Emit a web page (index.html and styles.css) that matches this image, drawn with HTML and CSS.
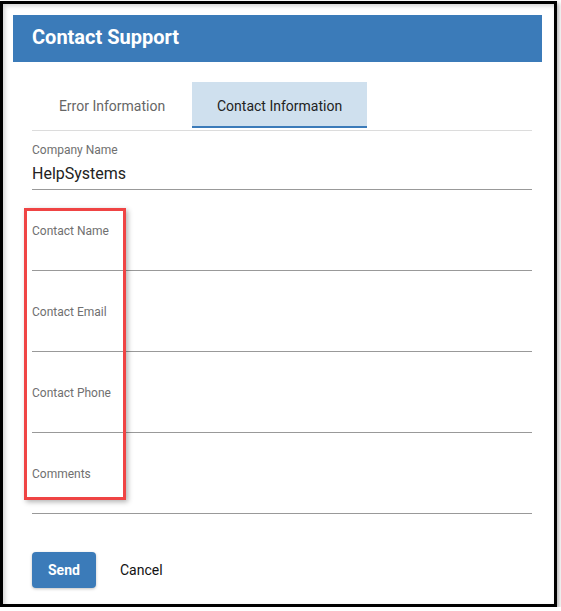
FILE: index.html
```html
<!DOCTYPE html>
<html lang="en">
<head>
  <meta charset="UTF-8" />
  <title>Contact Support</title>
  <link rel="stylesheet" href="styles.css">
</head>
<body>
  <div class="frame">
    <div class="header">
      <h1>Contact Support</h1>
    </div>

    <div class="content">
      <!-- Tabs -->
      <div class="tabs">
        <div class="tab">Error Information</div>
        <div class="tab active">Contact Information</div>
      </div>

      <!-- Fields -->
      <div class="field first">
        <label>Company Name</label>
        <div class="input">HelpSystems</div>
      </div>
      <div class="field">
        <label>Contact Name</label>
        <div class="input"></div>
      </div>
      <div class="field">
        <label>Contact Email</label>
        <div class="input"></div>
      </div>
      <div class="field">
        <label>Contact Phone</label>
        <div class="input"></div>
      </div>
      <div class="field">
        <label>Comments</label>
        <div class="input"></div>
      </div>

      <div class="actions">
        <button class="send">Send</button>
        <button class="cancel">Cancel</button>
      </div>
    </div>

    <!-- highlight annotation -->
    <div class="highlight"></div>
  </div>
</body>
</html>
```

FILE: styles.css
```css
body {
  font-family: Roboto, "Liberation Sans", sans-serif;
  background: #fff;
  margin: 0;
  padding: 0;
}
.frame {
  position: relative;
  box-sizing: border-box;
  width: 557px;
  height: 606px;
  margin-top: 1px;
  border: 3px solid #000;
  background: #fff;
  box-shadow: 2px 2px 4px rgba(0,0,0,0.3), inset 2px 2px 4px rgba(0,0,0,0.18);
  padding: 11px 12px 0 10px;
}
.header {
  background: #3b7bb9;
  height: 47px;
  box-sizing: border-box;
  padding: 0 0 4px 19px;
  display: flex;
  align-items: center;
}
h1 {
  margin: 0;
  color: #fff;
  font-size: 20px;
  font-weight: bold;
}
.content {
  padding: 20px 10px 0 19px;
}
.tabs {
  display: flex;
  border-bottom: 1px solid #dcdcdc;
}
.tab {
  min-width: 160px;
  box-sizing: border-box;
  padding: 0 25px;
  height: 48px;
  line-height: 48px;
  text-align: center;
  font-size: 14px;
  color: #666;
}
.tab.active {
  background: #cfe0ee;
  color: #222;
  height: 46px;
  line-height: 48px;
  border-bottom: 2px solid #3b7bb9;
}
.field {
  margin-top: 33px;
  border-bottom: 1px solid #999;
}
.field.first {
  margin-top: 11px;
}
label {
  display: block;
  font-size: 12px;
  line-height: 16px;
  color: #707070;
}
.input {
  height: 31px;
  line-height: 31px;
  font-size: 16px;
  color: #222;
}
.actions {
  display: flex;
  gap: 8px;
  margin-top: 38px;
}
button {
  font-family: Roboto, "Liberation Sans", sans-serif;
  font-size: 14px;
  border: none;
  height: 36px;
  padding: 0 16px;
  border-radius: 4px;
  cursor: pointer;
  background: transparent;
}
.send {
  background: #3b7bb9;
  color: #fff;
  font-weight: bold;
  box-shadow: 0 1px 3px rgba(0,0,0,0.25);
}
.cancel {
  color: #111;
  font-weight: normal;
}
.highlight {
  position: absolute;
  left: 21px;
  top: 204px;
  width: 96px;
  height: 286px;
  border: 3px solid #ef4444;
  box-shadow: 2px 2px 5px rgba(0,0,0,0.3);
}
```
